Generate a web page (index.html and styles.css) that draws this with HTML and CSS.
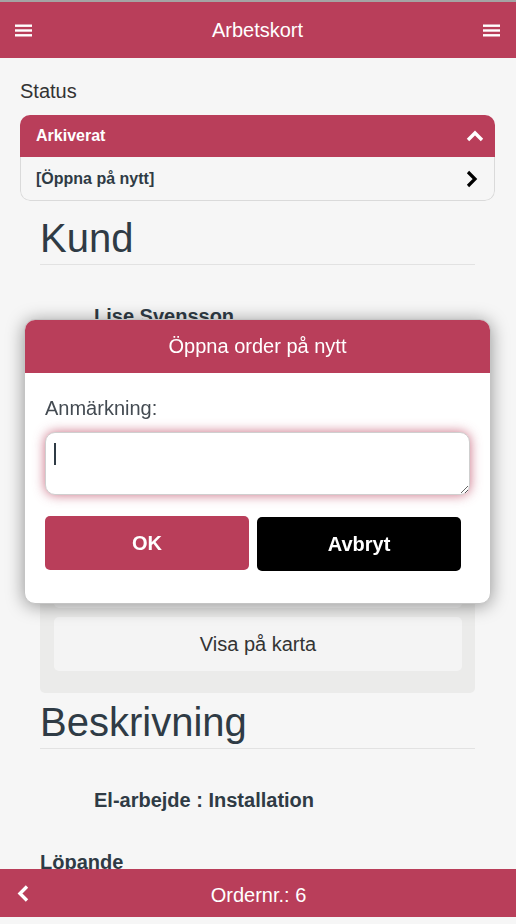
FILE: index.html
```html
<!DOCTYPE html>
<html lang="sv">
<head>
<meta charset="utf-8">
<title>Arbetskort</title>
<link rel="stylesheet" href="styles.css">
</head>
<body>
<div class="page">
  <div class="topline"></div>
  <header class="bar bar-top">
    <button class="icon-btn" aria-label="Meny">
      <svg width="17" height="13" viewBox="0 0 17 13"><rect x="0" y="0.5" width="17" height="2.4" fill="#fff"/><rect x="0" y="5.3" width="17" height="2.4" fill="#fff"/><rect x="0" y="10.1" width="17" height="2.4" fill="#fff"/></svg>
    </button>
    <h1 class="bar-title">Arbetskort</h1>
    <button class="icon-btn icon-right" aria-label="Alternativ">
      <svg width="17" height="13" viewBox="0 0 17 13"><rect x="0" y="0.5" width="17" height="2.4" fill="#fff"/><rect x="0" y="5.3" width="17" height="2.4" fill="#fff"/><rect x="0" y="10.1" width="17" height="2.4" fill="#fff"/></svg>
    </button>
  </header>

  <main class="content">
    <div class="status-label">Status</div>
    <div class="panel">
      <div class="panel-head">
        <span>Arkiverat</span>
        <svg width="18" height="12" viewBox="0 0 18 12"><polyline points="2,10 9,3 16,10" fill="none" stroke="#fff" stroke-width="3.4"/></svg>
      </div>
      <div class="panel-row">
        <span>[Öppna på nytt]</span>
        <svg width="12" height="18" viewBox="0 0 12 18"><polyline points="2,2 9,9 2,16" fill="none" stroke="#000" stroke-width="3.2"/></svg>
      </div>
    </div>

    <section class="section">
      <h2 class="section-title">Kund</h2>
      <div class="value first">Lise Svensson</div>
      <div class="value">Storgatan 12</div>
      <div class="value">123 45 Göteborg</div>
      <div class="value">070-123 45 67</div>
      <div class="action-box">
        <div class="action-btn">Ring kund</div>
        <div class="action-btn">Visa på karta</div>
      </div>
    </section>

    <section class="section section-desc">
      <h2 class="section-title">Beskrivning</h2>
      <div class="value first">El-arbejde : Installation</div>
      <div class="label">Löpande</div>
    </section>
  </main>

  <footer class="bar bar-bottom">
    <button class="icon-btn back" aria-label="Tillbaka">
      <svg width="12" height="17" viewBox="0 0 12 17"><polyline points="10,1.5 3,8.5 10,15.5" fill="none" stroke="#fff" stroke-width="3.4"/></svg>
    </button>
    <div class="bar-foot-title">Ordernr.: 6</div>
    <span></span>
  </footer>
</div>

<div class="dialog" role="dialog">
  <div class="dialog-head">Öppna order på nytt</div>
  <div class="dialog-body">
    <label class="dialog-label" for="note">Anmärkning:</label>
    <div class="textarea-wrap">
      <textarea id="note" class="dialog-input"></textarea>
    </div>
    <div class="dialog-actions">
      <button class="btn btn-ok">OK</button>
      <button class="btn btn-cancel">Avbryt</button>
    </div>
  </div>
</div>
</body>
</html>
```

FILE: styles.css
```css
* { box-sizing: border-box; }

html, body {
  margin: 0;
  padding: 0;
  height: 924px;
  overflow: hidden;
  background: #f6f6f6;
  font-family: "Liberation Sans", Arial, sans-serif;
  color: #2f3b45;
}

.page {
  height: 924px;
  display: flex;
  flex-direction: column;
  padding-bottom: 7px;
}

.topline {
  height: 2px;
  background: #a4a4a4;
  flex: none;
}

.bar {
  background: #b93e5a;
  color: #fff;
  flex: none;
  display: grid;
  grid-template-columns: 1fr auto 1fr;
  align-items: center;
}

.bar-top {
  height: 56px;
  padding: 0 16px 0 15px;
}

.bar-title {
  margin: 0;
  font-size: 20px;
  font-weight: normal;
  line-height: 23px;
}

.icon-btn {
  background: none;
  border: 0;
  padding: 0;
  margin: 0;
  display: flex;
  width: 17px;
  height: 13px;
  cursor: pointer;
}

.icon-right { justify-self: end; }

.content {
  flex: 1;
  overflow: hidden;
  padding: 22px 21px 0 20px;
}

.status-label {
  font-size: 20px;
  line-height: 23px;
  color: #333;
  margin-bottom: 12px;
}

.panel {
  border-radius: 10px;
  overflow: hidden;
}

.panel-head {
  height: 42px;
  background: #b93e5a;
  color: #fff;
  font-weight: bold;
  font-size: 16px;
  display: flex;
  align-items: center;
  justify-content: space-between;
  padding: 0 11px 0 16px;
}

.panel-row {
  height: 44px;
  border: 1px solid #dadada;
  border-top: 0;
  border-radius: 0 0 10px 10px;
  background: #f6f6f6;
  color: #2f3b45;
  font-weight: bold;
  font-size: 16px;
  display: flex;
  align-items: center;
  justify-content: space-between;
  padding: 0 16px 0 15px;
}

.section {
  margin: 15px 20px 0;
}

.section-title {
  margin: 0;
  font-size: 40px;
  line-height: 44px;
  font-weight: normal;
  color: #2f3b45;
  padding-bottom: 4px;
  border-bottom: 1px solid #e2e2e2;
}

.section-desc { margin-top: 7px; }

.value {
  font-size: 20px;
  line-height: 23px;
  font-weight: bold;
  padding-left: 54px;
  margin-top: 39px;
}

.value.first { margin-top: 40px; }

.label {
  font-size: 20px;
  line-height: 23px;
  font-weight: bold;
  margin-top: 39px;
}

.action-box {
  margin-top: 26px;
  background: #ebebea;
  border-radius: 5px;
  padding: 14px 13px 22px 14px;
  display: flex;
  flex-direction: column;
  gap: 9px;
}

.action-btn {
  height: 54px;
  background: #f4f4f4;
  border-radius: 5px;
  font-size: 20px;
  color: #333;
  display: flex;
  align-items: center;
  justify-content: center;
}

.bar-bottom {
  height: 48px;
  padding: 0 16px 0 17px;
}

.back { width: 12px; height: 17px; }

.bar-foot-title {
  font-size: 20px;
  line-height: 23px;
  padding-top: 4px;
}

/* dialog overlay */
.dialog {
  position: fixed;
  left: 24px;
  top: 319px;
  width: 467px;
  background: #fff;
  border-radius: 11px;
  overflow: hidden;
  border: 1px solid #c4c4c4;
  box-shadow: 0 2px 18px rgba(0, 0, 0, 0.4);
}

.dialog-head {
  height: 54px;
  margin: -1px -1px 0;
  background: #b93e5a;
  color: #fff;
  font-size: 20px;
  display: flex;
  align-items: center;
  justify-content: center;
  padding-top: 1px;
}

.dialog-body {
  padding: 24px 20px 32px 20px;
}

.dialog-label {
  display: block;
  font-size: 20px;
  line-height: 23px;
  color: #444b52;
}

.textarea-wrap {
  position: relative;
  margin-top: 12px;
}

.textarea-wrap::after {
  content: "";
  position: absolute;
  left: 9px;
  top: 11px;
  width: 2px;
  height: 22px;
  background: #2f3b45;
}

.dialog-input {
  display: block;
  width: 425px;
  height: 63px;
  border: 1px solid #cfcfcf;
  border-radius: 10px;
  background: #fff;
  box-shadow: 0 0 12px rgba(185, 62, 90, 0.75);
  resize: vertical;
  outline: none;
  font-family: inherit;
  font-size: 20px;
}

.dialog-actions {
  margin-top: 21px;
  display: flex;
  gap: 8px;
  align-items: flex-start;
}

.btn {
  width: 204px;
  height: 54px;
  border: 0;
  border-radius: 5px;
  color: #fff;
  font-family: inherit;
  font-weight: bold;
  font-size: 20px;
  cursor: pointer;
}

.btn-ok { background: #b93e5a; }

.btn-cancel {
  background: #000;
  margin-top: 1px;
}
```
